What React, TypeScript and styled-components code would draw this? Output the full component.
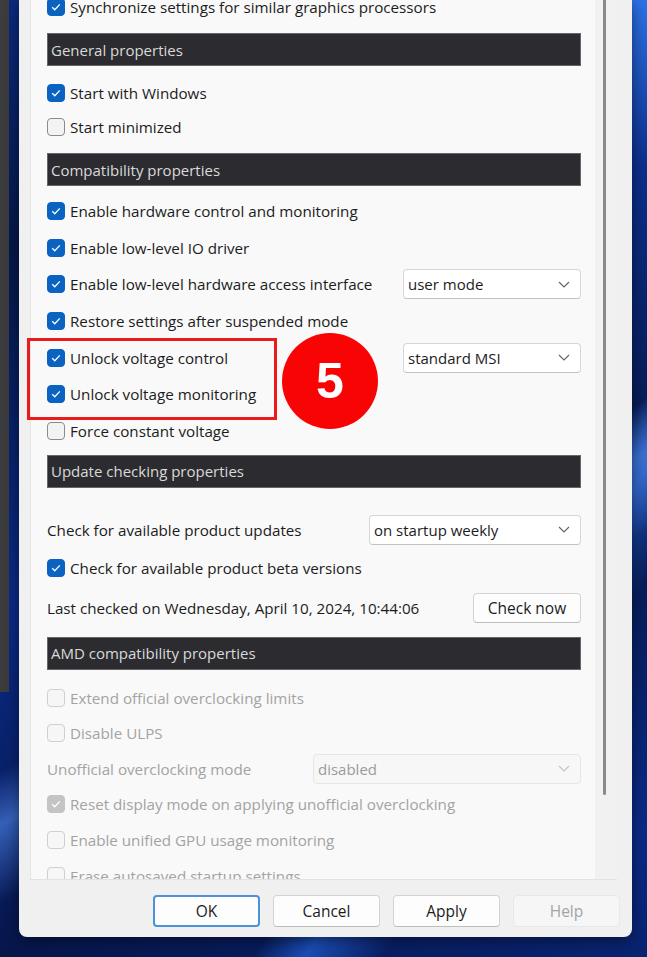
import React from 'react';
import styled, { createGlobalStyle } from 'styled-components';

const GlobalStyle = createGlobalStyle`
  html, body {
    margin: 0;
    padding: 0;
  }
  body {
    width: 647px;
    height: 957px;
    overflow: hidden;
    font-family: "Open Sans", "Noto Sans", sans-serif;
  }
`;

const Desktop = styled.div`
  position: relative;
  width: 647px;
  height: 957px;
  overflow: hidden;
  display: flex;
  align-items: flex-start;
  background:
    linear-gradient(150deg, transparent 0 58%, rgba(90, 150, 255, 0.55) 62%, transparent 68%),
    linear-gradient(125deg, transparent 0 70%, rgba(40, 110, 240, 0.6) 74%, transparent 80%),
    linear-gradient(200deg, #2c72e6 0%, #0c2f8c 14%, #061848 40%, #0a2a86 70%, #07164a 100%);
`;

const BehindWindow = styled.div`
  width: 9px;
  height: 692px;
  background: #3c3c3e;
  flex-shrink: 0;
`;

const Dialog = styled.div`
  margin-left: 10px;
  width: 613px;
  height: 937px;
  flex-shrink: 0;
  background: #f0f0f0;
  border-radius: 0 0 8px 8px;
  box-shadow: 0 4px 14px rgba(0, 0, 0, 0.45);
  display: flex;
  flex-direction: column;
`;

const Panel = styled.div`
  margin-left: 11px;
  width: 587px;
  height: 880px;
  box-sizing: border-box;
  background: #f9f9f9;
  border-left: 1px solid #e6e6e6;
  border-bottom: 1px solid #e2e2e2;
  display: flex;
`;

const Content = styled.div`
  flex: 1;
  overflow: hidden;
  padding: 0 14px 0 16px;
`;

const Scroller = styled.div`
  margin-top: -11px;
  display: flex;
  flex-direction: column;
`;

const ScrollTrack = styled.div`
  width: 22px;
  background: #f1f1f1;
  display: flex;
  justify-content: center;
`;

const ScrollThumb = styled.div`
  width: 3px;
  height: 795px;
  margin-left: -4px;
  background: #8a8a8a;
  border-radius: 0 0 2px 2px;
`;

const SectionHeader = styled.div<{ $top: number }>`
  margin-top: ${(p) => p.$top}px;
  height: 33px;
  box-sizing: border-box;
  background: #2c2c30;
  border: 1px solid #66666a;
  color: #d9d9d9;
  font-size: 15px;
  display: flex;
  align-items: center;
  padding-left: 3px;
`;

const Row = styled.div<{ $h: number; $top?: number }>`
  height: ${(p) => p.$h}px;
  margin-top: ${(p) => p.$top ?? 0}px;
  display: flex;
  align-items: center;
  justify-content: space-between;
  flex-shrink: 0;
`;

const Label = styled.div<{ $disabled?: boolean }>`
  display: flex;
  align-items: center;
  gap: 5px;
  font-size: 15.2px;
  color: ${(p) => (p.$disabled ? '#a3a3a3' : '#1c1c1c')};
  white-space: nowrap;
`;

const Box = styled.span<{ $checked: boolean; $disabled?: boolean }>`
  width: 18px;
  height: 18px;
  box-sizing: border-box;
  border-radius: 4px;
  flex-shrink: 0;
  display: inline-flex;
  align-items: center;
  justify-content: center;
  background: ${(p) =>
    p.$checked ? (p.$disabled ? '#c4c4c4' : '#0a63c0') : p.$disabled ? '#f6f6f6' : '#f3f3f3'};
  border: 1px solid
    ${(p) => (p.$checked ? (p.$disabled ? '#c4c4c4' : '#0a63c0') : p.$disabled ? '#cfcfcf' : '#8b8b8b')};
`;

const Select = styled.div<{ $w: number; $disabled?: boolean }>`
  width: ${(p) => p.$w}px;
  height: 30px;
  box-sizing: border-box;
  background: ${(p) => (p.$disabled ? '#f7f7f7' : '#ffffff')};
  border: 1px solid ${(p) => (p.$disabled ? '#e6e6e6' : '#d6d6d6')};
  border-bottom-color: ${(p) => (p.$disabled ? '#e6e6e6' : '#c2c2c2')};
  border-radius: 4px;
  display: flex;
  align-items: center;
  justify-content: space-between;
  padding: 0 10px 0 4px;
  font-size: 15px;
  color: ${(p) => (p.$disabled ? '#9c9c9c' : '#1c1c1c')};
`;

const Button = styled.div<{ $variant?: 'default' | 'disabled' }>`
  width: 107px;
  height: 32px;
  box-sizing: border-box;
  border-radius: 4px;
  display: flex;
  align-items: center;
  justify-content: center;
  font-size: 15.5px;
  background: ${(p) => (p.$variant === 'disabled' ? '#f6f6f6' : '#fdfdfd')};
  color: ${(p) => (p.$variant === 'disabled' ? '#a4a4a4' : '#1c1c1c')};
  border: ${(p) =>
    p.$variant === 'default'
      ? '2px solid #4a92dc'
      : p.$variant === 'disabled'
      ? '1px solid #e8e8e8'
      : '1px solid #d3d3d3'};
  border-bottom-color: ${(p) =>
    p.$variant === 'default' ? '#4a92dc' : p.$variant === 'disabled' ? '#e8e8e8' : '#bdbdbd'};
`;

const SmallButton = styled(Button)`
  width: 108px;
  height: 30px;
`;

const ButtonBar = styled.div`
  display: flex;
  justify-content: flex-end;
  gap: 13px;
  padding: 15px 12px 0 0;
`;

const HighlightBox = styled.div`
  position: absolute;
  left: 27px;
  top: 338px;
  width: 250px;
  height: 82px;
  box-sizing: border-box;
  border: 3px solid #ec1b1b;
`;

const StepBadge = styled.div`
  position: absolute;
  left: 282px;
  top: 333px;
  width: 96px;
  height: 96px;
  border-radius: 50%;
  background: #f80404;
  color: #ffffff;
  font-family: "Liberation Sans", Arial, sans-serif;
  font-weight: 700;
  font-size: 50px;
  display: flex;
  align-items: center;
  justify-content: center;
`;

const Check = ({ checked, disabled }: { checked: boolean; disabled?: boolean }) => (
  <Box $checked={checked} $disabled={disabled}>
    {checked && (
      <svg width="12" height="12" viewBox="0 0 12 12">
        <path d="M2.2 6.3 L4.8 8.8 L9.8 3.4" fill="none" stroke="#fff" strokeWidth="1.3" />
      </svg>
    )}
  </Box>
);

const Chevron = ({ color }: { color: string }) => (
  <svg width="12" height="7" viewBox="0 0 12 7">
    <path d="M1 1 L6 6 L11 1" fill="none" stroke={color} strokeWidth="1.2" />
  </svg>
);

const Option = ({
  label,
  checked,
  disabled,
  children,
}: {
  label: string;
  checked?: boolean;
  disabled?: boolean;
  children?: React.ReactNode;
}) => (
  <>
    <Label $disabled={disabled}>
      {checked !== undefined && <Check checked={checked} disabled={disabled} />}
      {label}
    </Label>
    {children}
  </>
);

const Dropdown = ({ value, w, disabled }: { value: string; w: number; disabled?: boolean }) => (
  <Select $w={w} $disabled={disabled}>
    <span>{value}</span>
    <Chevron color={disabled ? '#c4c4c4' : '#666'} />
  </Select>
);

export default function App() {
  return (
    <>
      <GlobalStyle />
      <Desktop>
        <BehindWindow />
        <Dialog>
          <Panel>
            <Content>
              <Scroller>
                <Row $h={36}>
                  <Option label="Synchronize settings for similar graphics processors" checked />
                </Row>

                <SectionHeader $top={8}>General properties</SectionHeader>
                <Row $h={34} $top={10}>
                  <Option label="Start with Windows" checked />
                </Row>
                <Row $h={34}>
                  <Option label="Start minimized" checked={false} />
                </Row>

                <SectionHeader $top={9}>Compatibility properties</SectionHeader>
                <Row $h={36.7} $top={6.5}>
                  <Option label="Enable hardware control and monitoring" checked />
                </Row>
                <Row $h={36.7}>
                  <Option label="Enable low-level IO driver" checked />
                </Row>
                <Row $h={36.7}>
                  <Option label="Enable low-level hardware access interface" checked>
                    <Dropdown value="user mode" w={178} />
                  </Option>
                </Row>
                <Row $h={36.7}>
                  <Option label="Restore settings after suspended mode" checked />
                </Row>
                <Row $h={36.7}>
                  <Option label="Unlock voltage control" checked>
                    <Dropdown value="standard MSI" w={178} />
                  </Option>
                </Row>
                <Row $h={36.7}>
                  <Option label="Unlock voltage monitoring" checked />
                </Row>
                <Row $h={36.7}>
                  <Option label="Force constant voltage" checked={false} />
                </Row>

                <SectionHeader $top={5.6}>Update checking properties</SectionHeader>
                <Row $h={38} $top={23}>
                  <Option label="Check for available product updates">
                    <Dropdown value="on startup weekly" w={212} />
                  </Option>
                </Row>
                <Row $h={38}>
                  <Option label="Check for available product beta versions" checked />
                </Row>
                <Row $h={38} $top={2}>
                  <Option label="Last checked on Wednesday, April 10, 2024, 10:44:06">
                    <SmallButton>Check now</SmallButton>
                  </Option>
                </Row>

                <SectionHeader $top={10}>AMD compatibility properties</SectionHeader>
                <Row $h={35.6} $top={10}>
                  <Option label="Extend official overclocking limits" checked={false} disabled />
                </Row>
                <Row $h={35.6}>
                  <Option label="Disable ULPS" checked={false} disabled />
                </Row>
                <Row $h={35.6}>
                  <Option label="Unofficial overclocking mode" disabled>
                    <Dropdown value="disabled" w={268} disabled />
                  </Option>
                </Row>
                <Row $h={35.6}>
                  <Option label="Reset display mode on applying unofficial overclocking" checked disabled />
                </Row>
                <Row $h={35.6}>
                  <Option label="Enable unified GPU usage monitoring" checked={false} disabled />
                </Row>
                <Row $h={35.6}>
                  <Option label="Erase autosaved startup settings" checked={false} disabled />
                </Row>
              </Scroller>
            </Content>
            <ScrollTrack>
              <ScrollThumb />
            </ScrollTrack>
          </Panel>
          <ButtonBar>
            <Button $variant="default">OK</Button>
            <Button>Cancel</Button>
            <Button>Apply</Button>
            <Button $variant="disabled">Help</Button>
          </ButtonBar>
        </Dialog>
        <HighlightBox />
        <StepBadge>5</StepBadge>
      </Desktop>
    </>
  );
}
